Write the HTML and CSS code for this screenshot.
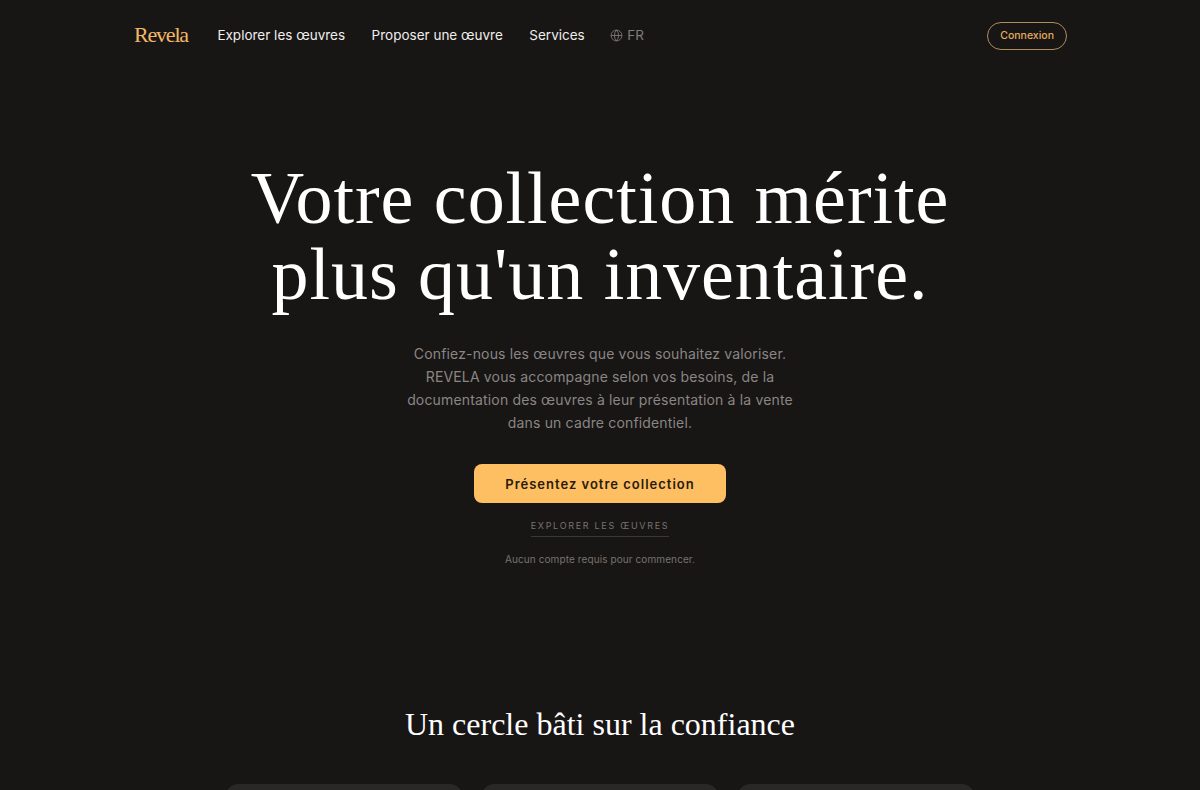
FILE: index.html
```html
<!DOCTYPE html>
<html lang="fr">
<head>
    <meta charset="UTF-8">
    <meta name="viewport" content="width=device-width, initial-scale=1.0">
    <title>Revela</title>
    <link rel="stylesheet" href="styles.css">
</head>
<body>
    <header class="nav">
        <div class="nav-left">
            <a class="logo" href="#">Revela</a>
            <a class="nav-link" href="#">Explorer les œuvres</a>
            <a class="nav-link" href="#">Proposer une œuvre</a>
            <a class="nav-link" href="#">Services</a>
            <span class="lang">
                <svg class="globe" viewBox="0 0 24 24" fill="none" stroke="currentColor" stroke-width="1.6">
                    <circle cx="12" cy="12" r="10"></circle>
                    <path d="M2 12h20"></path>
                    <path d="M12 2a15 15 0 0 1 0 20a15 15 0 0 1 0-20z"></path>
                </svg>
                FR
            </span>
        </div>
        <a class="login" href="#">Connexion</a>
    </header>

    <section class="hero">
        <h1>Votre collection mérite<br>plus qu'un inventaire.</h1>
        <p class="lead">Confiez-nous les œuvres que vous souhaitez valoriser.<br>REVELA vous accompagne selon vos besoins, de la<br>documentation des œuvres à leur présentation à la vente<br>dans un cadre confidentiel.</p>
        <a class="cta" href="#">Présentez votre collection</a>
        <a class="explore" href="#">EXPLORER LES ŒUVRES</a>
        <p class="note">Aucun compte requis pour commencer.</p>
    </section>

    <section class="trust">
        <h2>Un cercle bâti sur la confiance</h2>
        <div class="cards">
            <div class="card"></div>
            <div class="card"></div>
            <div class="card"></div>
        </div>
    </section>
</body>
</html>
```

FILE: styles.css
```css
html, body {
    height: 100%;
    overflow: hidden;
}
body {
    margin: 0;
    background-color: #181515;
    color: #fff;
    font-family: "Inter", "Liberation Sans", sans-serif;
}
a {
    text-decoration: none;
    color: inherit;
}
.nav {
    display: flex;
    justify-content: space-between;
    align-items: center;
    height: 71px;
    padding: 0 133px 0 134px;
}
.nav-left {
    display: flex;
    align-items: center;
    gap: 26.5px;
    padding-bottom: 1px;
}
.logo {
    font-family: "Liberation Serif", serif;
    font-size: 22px;
    letter-spacing: -1.2px;
    color: #f2b866;
    margin-right: 3px;
}
.nav-link {
    font-size: 13.5px;
    color: #f0eeeb;
}
.lang {
    display: flex;
    align-items: center;
    gap: 4px;
    margin-left: -1px;
    font-size: 13.5px;
    color: #817d79;
}
.globe {
    width: 13px;
    height: 13px;
}
.login {
    display: flex;
    align-items: center;
    height: 26px;
    padding: 0 12px;
    border: 1px solid #b08c5c;
    border-radius: 14px;
    font-size: 10.5px;
    font-weight: 500;
    color: #e5ab5f;
}
.hero {
    display: flex;
    flex-direction: column;
    align-items: center;
    text-align: center;
    padding-top: 89px;
}
.hero h1 {
    margin: 0;
    font-family: "Liberation Serif", serif;
    font-weight: 400;
    font-size: 74px;
    line-height: 76px;
    letter-spacing: 0.95px;
}
.lead {
    margin: 30px 0 0;
    font-size: 14px;
    line-height: 23px;
    letter-spacing: 0.16px;
    color: #8a8683;
}
.cta {
    display: flex;
    align-items: center;
    justify-content: center;
    width: 252px;
    height: 39px;
    margin-top: 30px;
    background-color: #fdbf62;
    border-radius: 8px;
    color: #2a1a0a;
    font-size: 13px;
    font-weight: 600;
    letter-spacing: 1px;
}
.explore {
    margin-top: 17px;
    padding-bottom: 5px;
    border-bottom: 1px solid #3a3734;
    font-size: 9px;
    letter-spacing: 1.7px;
    color: #77736f;
}
.note {
    margin: 16px 0 0;
    font-size: 10px;
    letter-spacing: 0.1px;
    color: #77736f;
}
.trust {
    margin-top: 140px;
}
.trust h2 {
    margin: 0;
    text-align: center;
    font-family: "Liberation Serif", serif;
    font-weight: 400;
    font-size: 32px;
    line-height: 38px;
}
.cards {
    display: grid;
    grid-template-columns: repeat(3, 238px);
    gap: 18px;
    justify-content: center;
    margin-top: 41px;
}
.card {
    height: 120px;
    background-color: #2a2827;
    border-radius: 14px;
}
```
